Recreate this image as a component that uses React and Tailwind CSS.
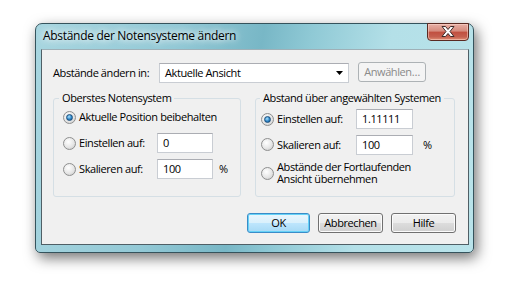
import React from 'react';

const Radio = ({ checked }) => (
  <span className="flex h-[13px] w-[13px] shrink-0 items-center justify-center rounded-full border border-[#8e8f8f] bg-[radial-gradient(circle_at_40%_35%,#ffffff_0%,#e6e6e6_55%,#c4c4c4_100%)]">
    {checked && (
      <span className="h-[7px] w-[7px] rounded-full border border-[#1c4f7c] bg-[radial-gradient(circle_at_40%_35%,#a9e2ff_0%,#2f86c8_55%,#0e4a80_100%)]" />
    )}
  </span>
);

const TextBox = ({ value, width }) => (
  <div className={`flex h-[20px] shrink-0 items-center border border-[#c9cdd3] border-t-[#abadb3] bg-white pl-[5px] ${width}`}>
    {value}
  </div>
);

const Button = ({ label, isDefault, width }) => (
  <button
    className={
      isDefault
        ? `h-[20px] ${width} rounded-[3px] border border-[#3a8cc8] bg-[linear-gradient(#eaf6fd_0%,#d9f0fc_50%,#bee6fd_50%,#a7d9f5_100%)] text-black shadow-[inset_0_0_0_1px_#66d2f7]`
        : `h-[20px] ${width} rounded-[3px] border border-[#707070] bg-[linear-gradient(#f2f2f2_0%,#ebebeb_50%,#dddddd_50%,#cfcfcf_100%)] text-black shadow-[inset_0_0_0_1px_#fbfbfb]`
    }
  >
    {label}
  </button>
);

export default function App() {
  return (
    <div className="min-h-[286px] w-[512px] whitespace-nowrap bg-white pl-[35px] pt-[23px] font-['Open_Sans',sans-serif] text-[11px] leading-[16px] tracking-[-0.4px] text-black">
      {/* window frame */}
      <div className="flex h-[230px] w-[439px] flex-col rounded-t-[7px] rounded-b-[5px] border border-[#35535c] bg-[linear-gradient(100deg,#a8d6e0_0%,#93c9d6_30%,#78b7c6_48%,#8fc9d5_58%,#b4e0e8_75%,#b9e3ea_100%)] pl-[5px] pr-[4px] shadow-[3px_5px_14px_rgba(0,0,0,0.55)]">
        {/* title bar */}
        <div className="flex h-[25px] shrink-0 items-start justify-between">
          <span className="mt-[4px] pl-[2px] text-[12px] tracking-[-0.3px] [text-shadow:0_0_6px_#ffffff,0_0_10px_#ffffff]">
            Abstände der Notensysteme ändern
          </span>
          <button className="-mt-[1px] flex h-[18px] w-[42px] items-center justify-center rounded-b-[4px] border border-[#5a2a22] bg-[linear-gradient(#e8b0a6_0%,#d58a7c_45%,#c14f3f_50%,#c5604f_80%,#e08f74_100%)] shadow-[inset_0_0_0_1px_rgba(255,220,210,0.5)]">
            <svg width="14" height="11" viewBox="0 0 14 11" className="-mt-[2px]">
              <polygon
                points="1,0.5 4.5,0.5 7,3.5 9.5,0.5 13,0.5 9,5.5 13,10.5 9.5,10.5 7,7.5 4.5,10.5 1,10.5 5,5.5"
                fill="#ffffff"
                stroke="#3d2b29"
                strokeWidth="1"
                strokeLinejoin="round"
              />
            </svg>
          </button>
        </div>

        {/* client area */}
        <div className="flex h-[196px] flex-col border border-[#4f5f66] border-t-[#9fb0b7] bg-[#f0f0f0] pl-[11px] pr-[12px] pt-[13px]">
          <div className="flex h-[20px] items-center">
            <span className="w-[106px] shrink-0">Abstände ändern in:</span>
            <div className="flex h-[20px] w-[190px] shrink-0 items-center justify-between border border-[#c9cdd3] border-t-[#abadb3] bg-white pl-[5px] pr-[5px]">
              <span>Aktuelle Ansicht</span>
              <svg width="7" height="4" viewBox="0 0 7 4">
                <polygon points="0,0 7,0 3.5,4" fill="#000000" />
              </svg>
            </div>
            <button className="mb-[2px] ml-[9px] h-[20px] w-[68px] shrink-0 rounded-[3px] border border-[#adb2b5] bg-[#f4f4f4] text-[#8a8a8a]">
              Anwählen…
            </button>
          </div>

          <div className="mt-[7px] flex gap-[14px]">
            {/* left group */}
            <fieldset className="h-[107px] w-[188px] rounded-[3px] border border-[#d5dfe5] pl-[9px]">
              <legend className="-ml-[4px] px-[3px]">Oberstes Notensystem</legend>
              <div className="flex h-[22px] items-center gap-[3px]">
                <Radio checked />
                <span>Aktuelle Position beibehalten</span>
              </div>
              <div className="mt-[2px] flex h-[26px] items-center">
                <div className="flex w-[94px] shrink-0 items-center gap-[3px]">
                  <Radio />
                  <span>Einstellen auf:</span>
                </div>
                <TextBox value="0" width="w-[56px]" />
              </div>
              <div className="flex h-[26px] items-center">
                <div className="flex w-[94px] shrink-0 items-center gap-[3px]">
                  <Radio />
                  <span>Skalieren auf:</span>
                </div>
                <TextBox value="100" width="w-[56px]" />
                <span className="ml-[6px]">%</span>
              </div>
            </fieldset>

            {/* right group */}
            <fieldset className="h-[107px] w-[200px] rounded-[3px] border border-[#d5dfe5] pl-[5px]">
              <legend className="-ml-[1px] px-[3px]">Abstand über angewählten Systemen</legend>
              <div className="flex h-[26px] items-center">
                <div className="flex w-[95px] shrink-0 items-center gap-[3px]">
                  <Radio checked />
                  <span>Einstellen auf:</span>
                </div>
                <TextBox value="1.11111" width="w-[57px]" />
              </div>
              <div className="flex h-[25px] items-center">
                <div className="flex w-[95px] shrink-0 items-center gap-[3px]">
                  <Radio />
                  <span>Skalieren auf:</span>
                </div>
                <TextBox value="100" width="w-[57px]" />
                <span className="ml-[10px]">%</span>
              </div>
              <div className="mt-[4px] flex items-center gap-[3px] leading-[12px]">
                <Radio />
                <span>
                  Abstände der Fortlaufenden
                  <br />
                  Ansicht übernehmen
                </span>
              </div>
            </fieldset>
          </div>

          <div className="mt-[16px] flex justify-end gap-[8px]">
            <Button label="OK" isDefault width="w-[63px]" />
            <Button label="Abbrechen" width="w-[65px]" />
            <Button label="Hilfe" width="w-[65px]" />
          </div>
        </div>
      </div>
    </div>
  );
}
